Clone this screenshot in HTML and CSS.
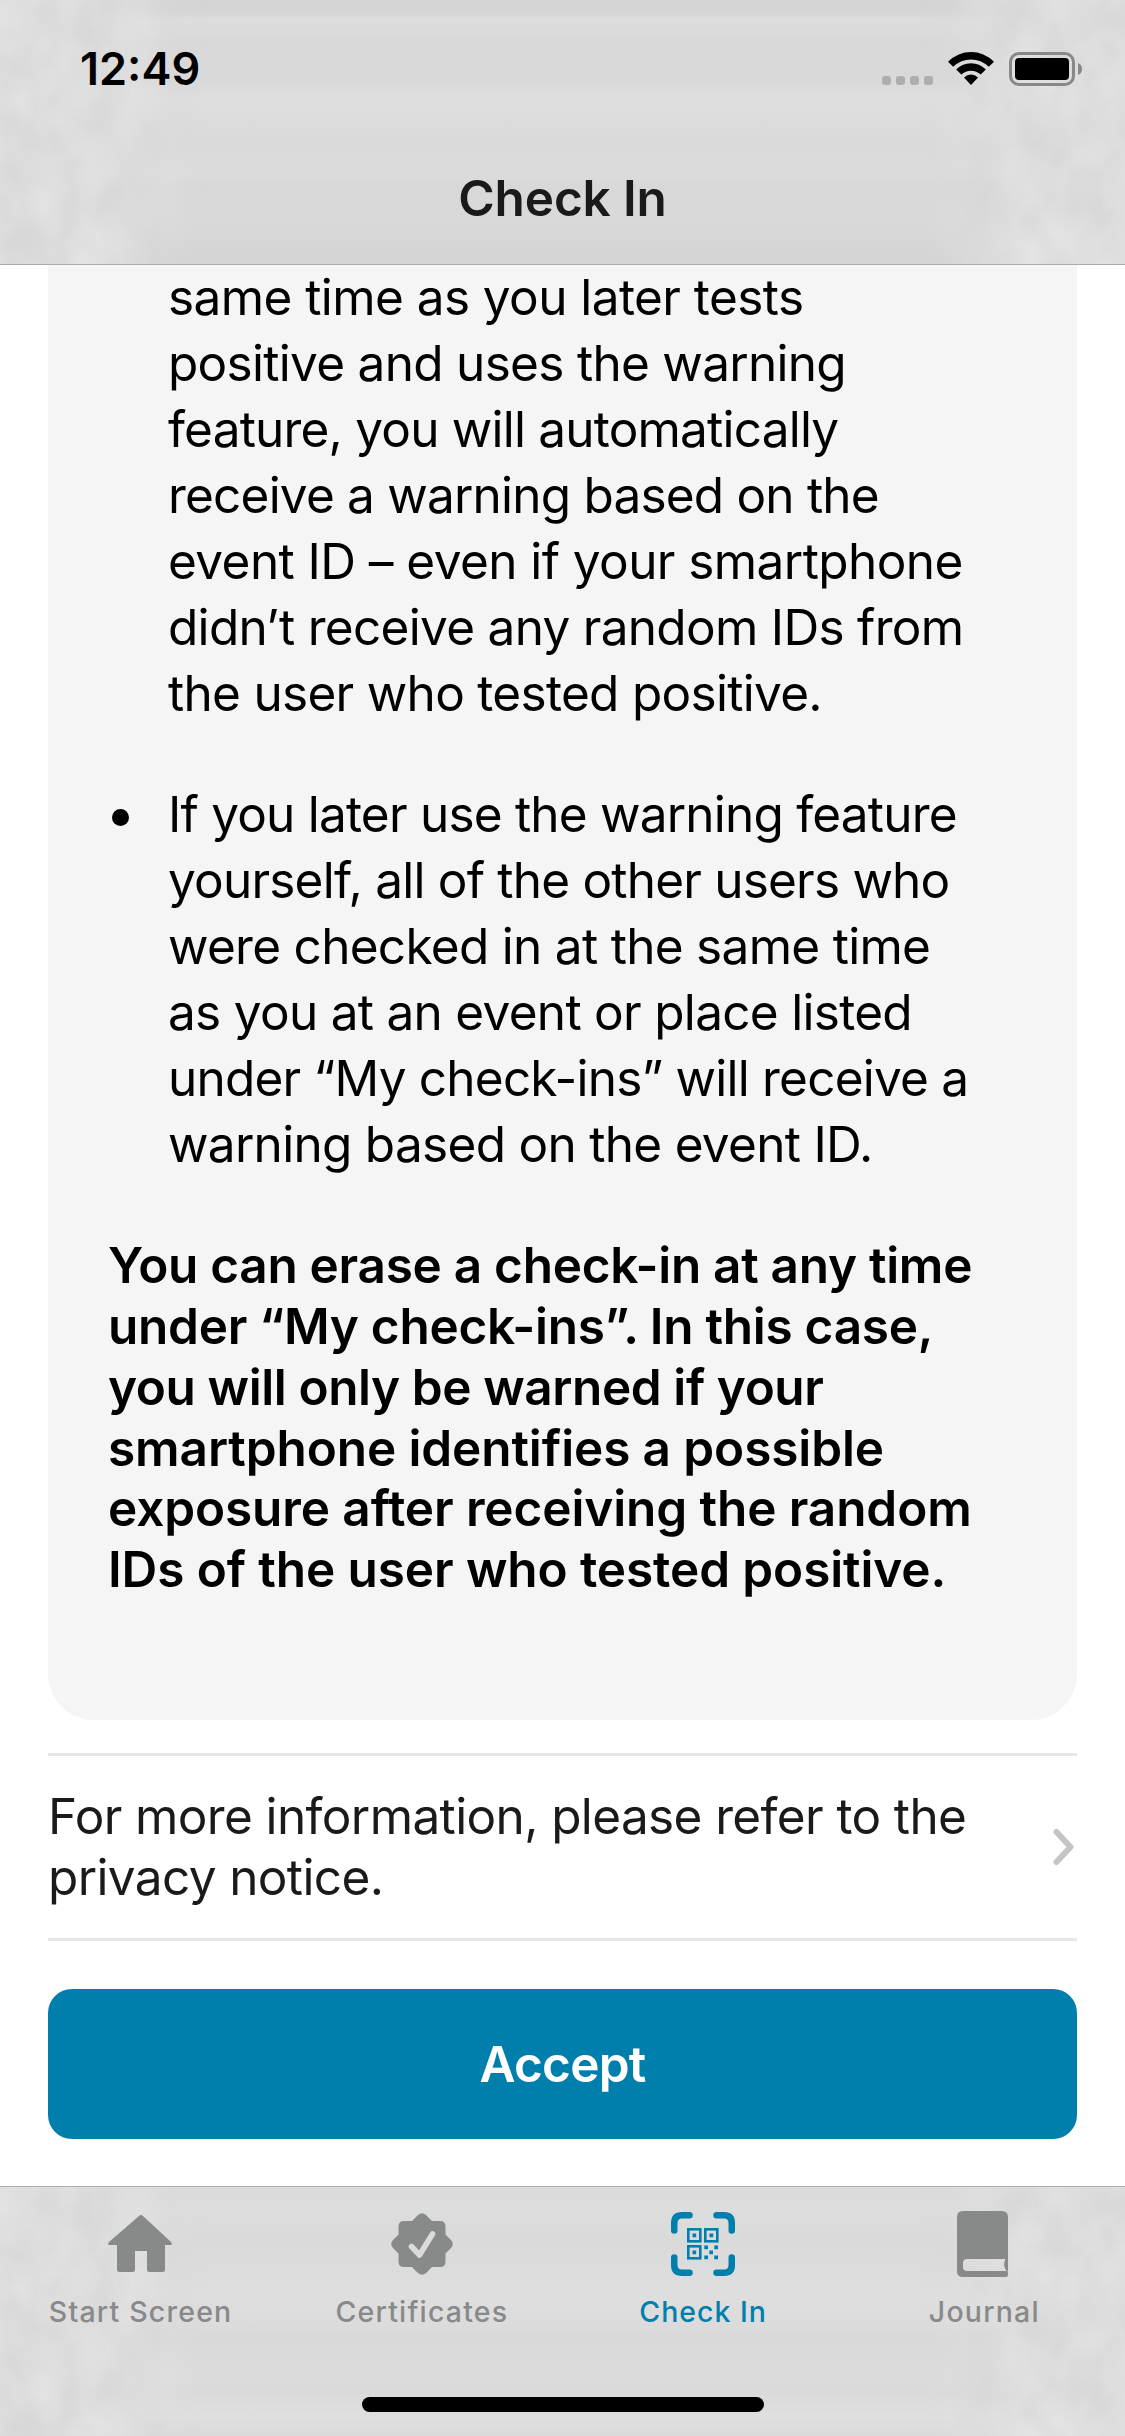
FILE: index.html
```html
<!DOCTYPE html>
<html lang="en">
<head>
<meta charset="utf-8">
<title>Check In</title>
<link rel="stylesheet" href="styles.css">
</head>
<body>
<div class="screen">
  <header class="navbar">
    <svg class="texture" width="1125" height="264" viewBox="0 0 1125 264" aria-hidden="true">
      <defs>
        <filter id="mottle" x="0" y="0" width="100%" height="100%" color-interpolation-filters="sRGB">
          <feTurbulence type="fractalNoise" baseFrequency="0.025 0.018" numOctaves="3" seed="4"/>
          <feColorMatrix values="0.07 0 0 0 0.832  0.07 0 0 0 0.832  0.07 0 0 0 0.832  0 0 0 0 1"/>
        </filter>
        <linearGradient id="edges">
          <stop offset="0" stop-color="#fff"/><stop offset=".08" stop-color="#fff"/>
          <stop offset=".18" stop-color="#000"/><stop offset=".82" stop-color="#000"/>
          <stop offset=".92" stop-color="#fff"/><stop offset="1" stop-color="#fff"/>
        </linearGradient>
        <mask id="sides"><rect width="1125" height="264" fill="url(#edges)"/></mask>
      </defs>
      <g mask="url(#sides)"><rect width="1125" height="264" filter="url(#mottle)"/></g>
    </svg>
    <div class="status">
      <span class="time">12:49</span>
      <div class="indicators">
        <div class="signal"><i></i><i></i><i></i><i></i></div>
        <svg width="46" height="33" viewBox="0 0 46 33">
          <path d="M0 9.8Q10 0 23 0T46 9.8L40.8 14.8Q33 7.5 23 7.5T5.200 14.800Z"/>
          <path d="M8.200 17.500Q14.500 11.300 23 11.300T37.800 17.500L32.700 22.600Q28.500 18.700 23 18.700T13.300 22.600Z"/>
          <path d="M16 25.500Q19 22.600 23 22.600T30 25.500L23 33Z"/>
        </svg>
        <svg width="74" height="34" viewBox="0 0 74 34">
          <rect x="1.500" y="1.500" width="63" height="31" rx="8.500" fill="none" stroke="#888" stroke-width="3"/>
          <rect x="6" y="6" width="54" height="22" rx="4"/>
          <path d="M69 11Q73 12.500 73 17T69 23Z" fill="#888"/>
        </svg>
      </div>
    </div>
    <h1 class="title">Check In</h1>
  </header>

  <main class="content">
    <section class="card">
      <ul class="points">
        <li>
          <p>
            <span class="line loose">same time as you later tests</span>
            <span class="line">positive and uses the warning</span>
            <span class="line tight">feature, you will automatically</span>
            <span class="line tight">receive a warning based on the</span>
            <span class="line loose">event ID – even if your smartphone</span>
            <span class="line">didn’t receive any random IDs from</span>
            <span class="line">the user who tested positive.</span>
          </p>
        </li>
        <li class="marked">
          <p>
            <span class="line tight">If you later use the warning feature</span>
            <span class="line tight">yourself, all of the other users who</span>
            <span class="line">were checked in at the same time</span>
            <span class="line">as you at an event or place listed</span>
            <span class="line tight">under “My check-ins” will receive a</span>
            <span class="line">warning based on the event ID.</span>
          </p>
        </li>
      </ul>
      <p class="note">
        <span class="line">You can erase a check-in at any time</span>
        <span class="line">under “My check-ins”. In this case,</span>
        <span class="line tight">you will only be warned if your</span>
        <span class="line loose">smartphone identifies a possible</span>
        <span class="line loose">exposure after receiving the random</span>
        <span class="line loose">IDs of the user who tested positive.</span>
      </p>
    </section>

    <a class="privacy">
      <span>For more information, please refer to the<br>privacy notice.</span>
      <svg class="chevron" width="24" height="38" viewBox="0 0 24 38"><path d="M5.500 4L19.500 19L5.500 34" fill="none" stroke="#c4c4c6" stroke-width="6" stroke-linecap="round" stroke-linejoin="round"/></svg>
    </a>

    <button class="accept">Accept</button>
  </main>

  <nav class="tabbar">
    <svg class="texture" width="1125" height="249" viewBox="0 0 1125 249" aria-hidden="true">
      <g mask="url(#sides)"><rect width="1125" height="249" filter="url(#mottle)"/></g>
    </svg>
    <div class="tabs">
      <a class="tab">
        <svg width="72" height="72" viewBox="0 0 72 72"><path d="M34 8Q36 6 38 8L66 34Q68.500 37 65 37H60V61.500Q60 64 57.500 64H44.500Q42 64 42 61.500V43H30V61.500Q30 64 27.500 64H14.500Q12 64 12 61.500V37H5Q1.500 37 4 34Z"/></svg>
        Start Screen
      </a>
      <a class="tab">
        <svg width="72" height="72" viewBox="0 0 72 72"><path d="M32 7Q36 3.500 40 7L46 13H54Q59.500 13 59.500 18.500V26.500L65 32Q68.500 36 65 40L59.500 45.500V53.500Q59.500 59 54 59H46L40 65Q36 68.500 32 65L26 59H18Q12.500 59 12.500 53.500V45.500L7 40Q3.500 36 7 32L12.500 26.500V18.500Q12.500 13 18 13H26Z"/><path d="M25.500 38.500L33.500 47L46.500 26" fill="none" stroke="#dbdbdb" stroke-width="5.600" stroke-linecap="round" stroke-linejoin="round"/></svg>
        Certificates
      </a>
      <a class="tab active">
        <svg width="72" height="72" viewBox="0 0 72 72">
          <g fill="none" stroke="currentColor" stroke-width="6.500" stroke-linecap="round"><path d="M7.250 22.500V15Q7.250 7.250 15 7.250H22.500M49.500 7.250H57Q64.750 7.250 64.750 15V22.500M64.750 49.500V57Q64.750 64.750 57 64.750H49.500M22.500 64.750H15Q7.250 64.750 7.250 57V49.500"/></g>
          <g fill="none" stroke="currentColor" stroke-width="2.600"><rect x="21.300" y="21.300" width="12" height="12"/><rect x="38.300" y="21.300" width="12" height="12"/><rect x="21.300" y="38.300" width="12" height="12"/></g>
          <path d="M25.500 25.500h3.700v3.700h-3.700zM42.500 25.500h3.700v3.700h-3.700zM25.500 42.500h3.700v3.700h-3.700zM37.300 37.500h3.700v3.700h-3.700zM47.300 37.500h3.700v3.700h-3.700zM42.300 42.500h3.700v3.700h-3.700zM37.300 47.500h3.700v3.700h-3.700zM47.300 47.500h3.700v3.700h-3.700z"/>
        </svg>
        Check In
      </a>
      <a class="tab">
        <svg width="72" height="72" viewBox="0 0 72 72"><path d="M15 3H54Q60 3 60 9V63.500H59.500Q57.500 62.500 56.500 59Q55.500 54 57.500 51H19Q15 51 15 55V59Q15 63 19 63H59L60 65V67Q60 69 58 69H15Q9 69 9 63V9Q9 3 15 3Z"/></svg>
        Journal
      </a>
    </div>
    <div class="home-indicator"></div>
  </nav>
</div>
</body>
</html>
```
FILE: styles.css
```css
* { box-sizing: border-box; margin: 0; padding: 0; }

body { font-family: Inter, "Liberation Sans", sans-serif; background: #fff; color: #000; }

.screen { display: flex; flex-direction: column; width: 1125px; height: 2436px; overflow: hidden; }

/* Translucent bars */
.navbar, .tabbar { position: relative; z-index: 1; flex: none; isolation: isolate; }
.texture { position: absolute; inset: 0; z-index: -1; }

.navbar {
  height: 265px;
  border-bottom: 1px solid #acacac;
  background: linear-gradient(#d4d4d4 0, #d5d5d5 12px, #dddddd 20px, #dbdbdb 32px, #d8d8d8 42px, #d9d9d9 80px, #dedede 98px, #dadada 145px, #dcdcdc 172px, #d8d8d8 186px, #d9d9d9 215px, #d7d7d7 240px, #d4d4d4 264px);
}
.status { display: flex; justify-content: space-between; align-items: flex-start; height: 132px; padding: 41px 42px 0 80px; }
.time { font-size: 45px; font-weight: 600; line-height: 55px; }
.indicators { display: flex; padding-top: 11px; }
.indicators svg + svg { margin-left: 15px; }
.signal { display: flex; gap: 5px; margin: 24px 15px 0 0; }
.signal i { width: 9px; height: 9px; border-radius: 3px; background: #aeaeae; }
.title { color: #1a1a1a; text-align: center; font-size: 49.5px; font-weight: 600; line-height: 60px; padding-top: 36px; letter-spacing: -.14px; }

/* Scrolled consent text */
.content { flex: 1; display: flex; flex-direction: column; padding: 0 48px; }
.card { height: 1456px; margin-top: -1px; padding: 0 0 0 60px; border-radius: 0 0 46px 46px; background: #f5f5f5; flex: none; }
.line { display: block; white-space: nowrap; }
.points { display: flex; flex-direction: column; gap: 55px; list-style: none; font-size: 49.5px; line-height: 66px; letter-spacing: -.7px; }
.points li { display: flex; padding-left: 60px; }
.points .marked { padding-left: 4px; }
.marked::before { content: ""; flex: none; width: 17px; height: 17px; margin: 28px 39px 0 0; border-radius: 50%; background: #000; }
.points .tight { letter-spacing: -.79px; }
.points .loose { letter-spacing: -.57px; }
.note { margin-top: 58px; font-size: 49.5px; font-weight: 600; line-height: 60.86px; letter-spacing: -.28px; }
.note .tight { letter-spacing: -.4px; }
.note .loose { letter-spacing: -.1px; }

.privacy { flex: none; display: flex; align-items: center; justify-content: space-between; height: 188px; margin-top: 33px; padding-right: 2px; border: solid #e6e6e6; border-width: 3px 0; color: #1a1a1a; font-size: 49.5px; line-height: 60.86px; letter-spacing: -.62px; white-space: nowrap; }

.accept { flex: none; height: 150px; margin-top: 48px; border: 0; border-radius: 24px; background: #007fad; color: #fff; font: 600 49.5px/60px Inter, "Liberation Sans", sans-serif; letter-spacing: -.75px; }

/* Tab bar */
.tabbar {
  display: flex; flex-direction: column; align-items: center; height: 250px;
  border-top: 1px solid #acb0b0;
  background: linear-gradient(#dadada 0, #dddddd 20px, #dadada 55px, #dedede 110px, #dcdcdc 135px, #d9d9d9 150px, #dcdcdc 190px, #dadada 205px, #dfdfdf 230px, #dadada 249px);
}
.tabs { display: grid; grid-template-columns: repeat(4, 1fr); width: 100%; padding-top: 21px; }
.tab { display: flex; flex-direction: column; align-items: center; gap: 14px; color: #888989; fill: currentColor; font-size: 28.5px; font-weight: 500; line-height: 35px; letter-spacing: 1.2px; }
.active { color: #007fad; letter-spacing: 1px; }
.home-indicator { width: 402px; height: 15px; margin-top: 68px; border-radius: 8px; background: #000; }
```
